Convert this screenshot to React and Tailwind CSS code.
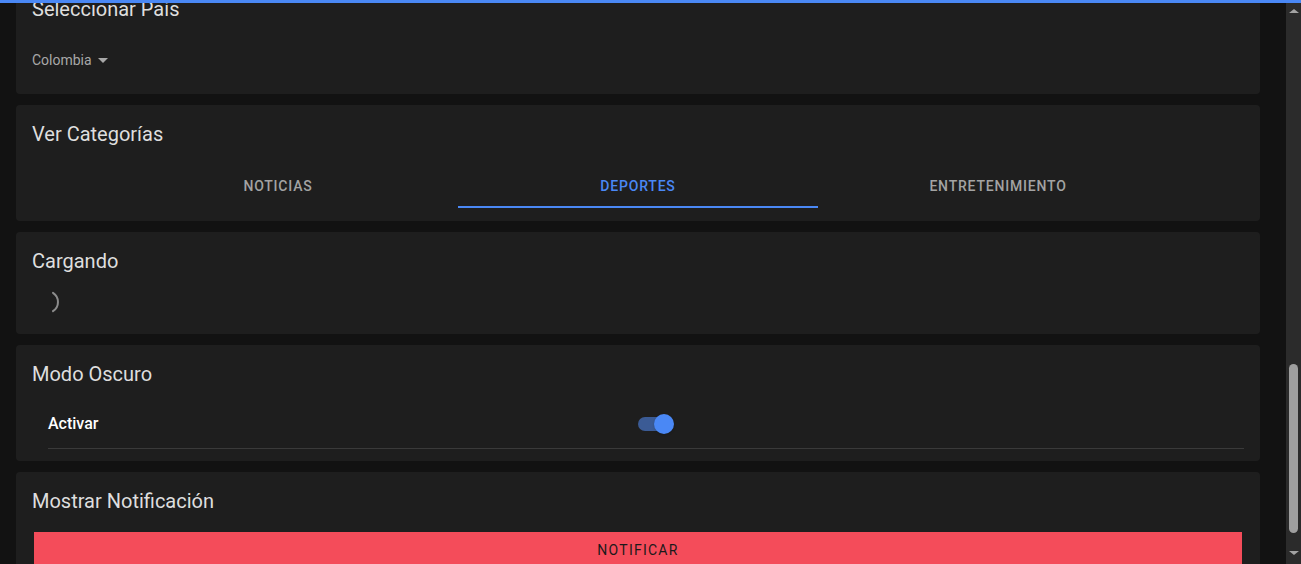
import { useState } from "react";

const tabs = ["Noticias", "Deportes", "Entretenimiento"];

function Card({ title, children, className = "" }) {
  return (
    <div className={`bg-[#1e1e1e] rounded px-4 pt-[13px] ${className}`}>
      <h6 className="text-[20px] leading-[32px] text-[#dedede] font-normal">{title}</h6>
      {children}
    </div>
  );
}

function Spinner() {
  return (
    <svg width="36" height="30" viewBox="0 0 36 30" fill="none">
      <path
        d="M 21 5.8 A 11 11 0 0 1 21 24.2"
        stroke="#8c8c8c"
        strokeWidth="2"
        strokeLinecap="round"
        transform="translate(0 1)"
      />
    </svg>
  );
}

function Scrollbar() {
  return (
    <div className="w-[15px] h-full bg-[#2b2b2b] flex flex-col items-center">
      <div className="h-[17px] flex items-center justify-center pt-[4px]">
        <div className="w-0 h-0 border-l-[5px] border-r-[5px] border-b-[4px] border-l-transparent border-r-transparent border-b-[#a3a3a3]" />
      </div>
      <div className="flex-1 w-full px-[3px] pt-[347px] pb-[14px]">
        <div className="w-full h-full rounded-full bg-[#9f9f9f]" />
      </div>
      <div className="h-[17px] flex items-center justify-center pb-[6px]">
        <div className="w-0 h-0 border-l-[5px] border-r-[5px] border-t-[4px] border-l-transparent border-r-transparent border-t-[#a3a3a3]" />
      </div>
    </div>
  );
}

export default function App() {
  const [tab, setTab] = useState(1);
  const [dark, setDark] = useState(true);

  return (
    <div
      className="relative w-[1301px] h-[564px] bg-[#121212] flex overflow-hidden"
      style={{ fontFamily: "Roboto, 'Liberation Sans', sans-serif" }}
    >
      <div className="absolute top-0 left-0 right-0 h-[3px] bg-[#4a88f5] z-10" />

      <div className="flex-1 h-full overflow-hidden">
        <div className="flex flex-col gap-[11px] pl-4 pr-[26px] -mt-[20px]">
          <Card title="Seleccionar País" className="pb-[24px]">
            <div className="mt-[25px] flex items-center gap-[6px] text-[14px] leading-[20px] text-[#a8a8a8]">
              <span>Colombia</span>
              <div className="w-0 h-0 border-l-[5px] border-r-[5px] border-t-[5px] border-l-transparent border-r-transparent border-t-[#a8a8a8]" />
            </div>
          </Card>

          <Card title="Ver Categorías" className="pb-[13px]">
            <div className="mt-[10px] flex justify-center">
              {tabs.map((t, i) => (
                <button
                  key={t}
                  onClick={() => setTab(i)}
                  className={`relative w-[360px] h-[48px] flex items-center justify-center pt-[4px] text-[14px] font-medium uppercase tracking-[0.8px] ${
                    tab === i ? "text-[#4a88f5]" : "text-[#a3a3a3]"
                  }`}
                >
                  {t}
                  {tab === i && (
                    <span className="absolute left-0 right-0 bottom-0 h-[2px] bg-[#4a88f5]" />
                  )}
                </button>
              ))}
            </div>
          </Card>

          <Card title="Cargando" className="pb-[18px]">
            <div className="mt-[9px] h-[30px]">
              <Spinner />
            </div>
          </Card>

          <Card title="Modo Oscuro" className="pb-[12px]">
            <div className="mt-[10px] ml-4 flex items-center h-[49px] border-b border-[#3a3a3a]">
              <span className="w-[590px] text-[16px] font-medium text-white">Activar</span>
              <button
                onClick={() => setDark(!dark)}
                className="relative w-[36px] h-[20px] flex items-center"
              >
                <span className={`block w-[34px] h-[14px] rounded-full ${dark ? "bg-[#3b5b95]" : "bg-[#5c5c5c]"}`} />
                <span
                  className={`absolute top-0 w-[20px] h-[20px] rounded-full shadow ${
                    dark ? "left-[16px] bg-[#4a88f5]" : "left-0 bg-[#e0e0e0]"
                  }`}
                />
              </button>
            </div>
          </Card>

          <Card title="Mostrar Notificación" className="pb-4">
            <button className="mt-[15px] mx-[2px] w-[1208px] h-[36px] bg-[#f44c5a] text-[14px] font-normal uppercase tracking-[1.25px] text-[#1a1a1a] flex items-center justify-center">
              Notificar
            </button>
          </Card>
        </div>
      </div>

      <Scrollbar />
    </div>
  );
}
